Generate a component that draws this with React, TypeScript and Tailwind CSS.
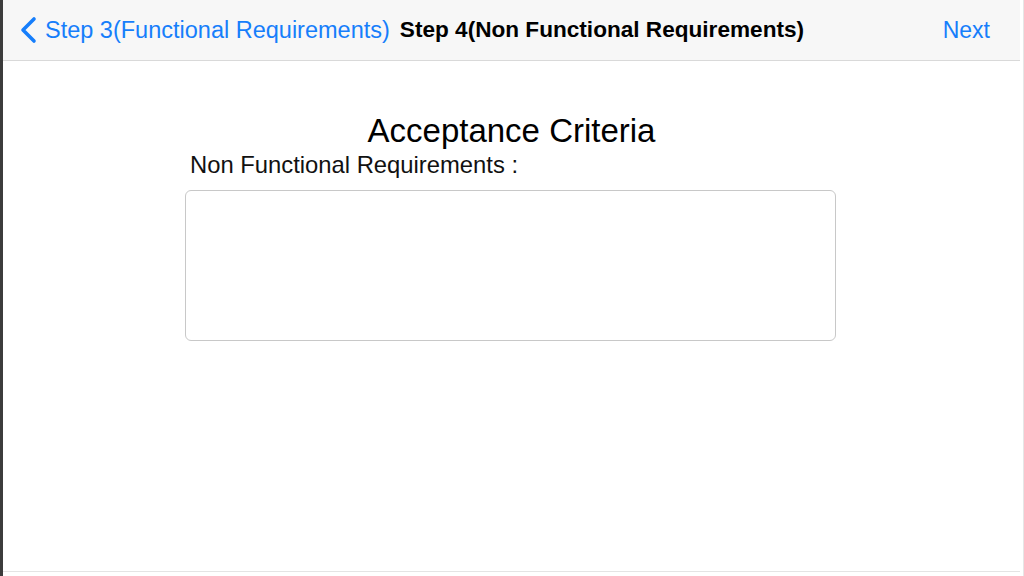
const FONT = "font-['Liberation_Sans',Arial,sans-serif]"

export default function App(): JSX.Element {
  return (
    <div className={`flex h-[576px] w-[1024px] overflow-hidden bg-white ${FONT}`}>
      <div className="w-[3px] shrink-0 bg-[#3c3c3c]" />
      <div className="flex min-w-0 flex-1 flex-col border-r border-[#e6e6e6] pr-[3px]">
        <NavBar />
        <main className="flex flex-1 flex-col items-center border-b border-[#e4e4e4]">
          <h1 className="mt-[50px] text-[33px] leading-[40px] text-black">Acceptance Criteria</h1>
          <div className="mr-[2px] w-[651px]">
            <label className="block pl-[5px] text-[23.8px] leading-[28px] text-[#111]">Non Functional Requirements :</label>
            <textarea className="mt-[11px] block h-[151px] w-full resize-none rounded-[6px] border border-[#c8c8c8] bg-white outline-none" />
          </div>
        </main>
        <div className="h-[4px] bg-white" />
      </div>
    </div>
  )
}

function NavBar(): JSX.Element {
  return (
    <header className="flex h-[61px] shrink-0 items-center border-b border-[#d9d9d9] bg-[#f7f7f7] pl-[15px] pr-[30px]">
      <button type="button" className="flex items-center text-[#167efb]">
        <svg width="20" height="28" viewBox="0 0 20 28" fill="none" className="mr-[7px]">
          <path d="M16 3 L5 14 L16 25" stroke="currentColor" strokeWidth="3.6" strokeLinecap="round" strokeLinejoin="round" />
        </svg>
        <span className="text-[23.5px] leading-[28px]">Step 3(Functional Requirements)</span>
      </button>
      <span className="ml-[10px] text-[22.6px] font-bold leading-[28px] text-black">Step 4(Non Functional Requirements)</span>
      <button type="button" className="ml-auto text-[23px] leading-[28px] text-[#167efb]">
        Next
      </button>
    </header>
  )
}
